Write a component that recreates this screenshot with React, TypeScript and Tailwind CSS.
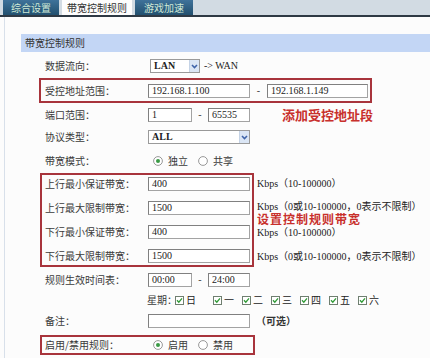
import React from "react";

const Input = ({ w, v }: { w: string; v?: string }) => (
  <div
    className={`${w} h-[14px] shrink-0 border border-[#a3a3a3] border-t-[#808080] border-l-[#808080] bg-white flex items-center pl-[3px] font-['Liberation_Serif',serif] text-[10px] leading-none text-[#222]`}
  >
    {v}
  </div>
);

const Select = ({ w, v }: { w: string; v: string }) => (
  <div
    className={`${w} h-[14px] shrink-0 border border-[#9a9a9a] bg-white flex items-center justify-between font-['Liberation_Serif',serif] text-[10px] leading-none font-semibold text-[#222]`}
  >
    <span className="pl-[3px]">{v}</span>
    <div className="w-[10px] h-[12px] bg-[#dbe6f5] border-l border-[#c5d3e6] flex items-center justify-center">
      <svg width="7" height="5" viewBox="0 0 7 5">
        <path d="M1 1 L3.5 3.6 L6 1" stroke="#3f63a8" strokeWidth="1.5" fill="none" />
      </svg>
    </div>
  </div>
);

const Radio = ({ on }: { on?: boolean }) => (
  <svg width="10" height="10" viewBox="0 0 10 10" className="shrink-0">
    <circle cx="5" cy="5" r="4.4" fill="#fff" stroke="#8c8c8c" strokeWidth="0.9" />
    {on && <circle cx="5" cy="5" r="2" fill="#3a9a45" />}
  </svg>
);

const Check = () => (
  <svg width="9" height="9" viewBox="0 0 9 9" className="shrink-0">
    <rect x="0.5" y="0.5" width="8" height="8" fill="#fff" stroke="#6f7f70" strokeWidth="1" />
    <path d="M2 4.3 L3.8 6.2 L7 2.4" stroke="#2f9a35" strokeWidth="1.3" fill="none" />
  </svg>
);

const RadioPair = ({ a, b }: { a: string; b: string }) => (
  <div className="flex items-center ml-[5px]">
    <Radio on />
    <span className="ml-[5px]">{a}</span>
    <span className="ml-[10px] flex items-center">
      <Radio />
    </span>
    <span className="ml-[5px]">{b}</span>
  </div>
);

const Label = ({ t }: { t: string }) => <div className="w-[103px] shrink-0">{t}</div>;

const Dash = ({ w }: { w: string }) => (
  <div className={`${w} shrink-0 text-center font-['Liberation_Serif',serif] text-[10px]`}>-</div>
);

const Kbps = ({ t, m }: { t: string; m: string }) => (
  <div className={`${m} h-[17px] flex items-center font-['Liberation_Serif','Noto_Sans_CJK_SC',serif] text-[10px] text-[#222] whitespace-nowrap`}>
    {t}
  </div>
);

export default function App() {
  const days = ["日", "一", "二", "三", "四", "五", "六"];
  return (
    <div className="w-[430px] h-[358px] overflow-hidden bg-[#fcfcfc] font-['Noto_Sans_CJK_SC',sans-serif] text-[10px] leading-none text-[#3a3a3a]">
      {/* tab bar */}
      <div className="h-[17px] bg-[#d2dbe3] border-b-2 border-[#2e3944] flex items-end pl-[3px] gap-[3px]">
        <div className="w-[56px] h-[15px] bg-gradient-to-b from-[#3f729a] to-[#22506f] text-[#cfe9d6] flex items-center justify-center">
          综合设置
        </div>
        <div className="w-[70px] h-[15px] bg-[#fdfdfd] text-[#333] flex items-center justify-center">
          带宽控制规则
        </div>
        <div className="w-[58px] h-[15px] bg-gradient-to-b from-[#3f729a] to-[#22506f] text-[#cfe9d6] flex items-center justify-center">
          游戏加速
        </div>
      </div>

      <div className="ml-[4px] border-l border-[#d8e0ea] h-[341px] pt-[17px]">
        {/* section header */}
        <div className="ml-[16px] h-[18px] bg-[#c3d6f5] flex items-center pl-[4px] text-[#333]">带宽控制规则</div>

        {/* 数据流向 */}
        <div className="mt-[2px] h-[24px] flex items-center pl-[40px]">
          <Label t="数据流向：" />
          <div className="ml-[2px]">
            <Select w="w-[50px]" v="LAN" />
          </div>
          <span className="ml-[4px] font-['Liberation_Serif',serif] text-[#222]">-&gt; WAN</span>
        </div>

        {/* 受控地址范围 */}
        <div className="ml-[34px] w-[333px] h-[25px] border-2 border-[#a8343c] flex items-center pl-[4px]">
          <Label t="受控地址范围：" />
          <Input w="w-[102px]" v="192.168.1.100" />
          <Dash w="w-[17px]" />
          <Input w="w-[101px]" v="192.168.1.149" />
        </div>

        {/* 端口范围 */}
        <div className="h-[23px] flex items-center pl-[40px]">
          <Label t="端口范围：" />
          <Input w="w-[44px]" v="1" />
          <Dash w="w-[16px]" />
          <Input w="w-[42px]" v="65535" />
          <span className="ml-[32px] text-[13px] font-bold text-[#c8302c] whitespace-nowrap">添加受控地址段</span>
        </div>

        {/* 协议类型 */}
        <div className="h-[22px] flex items-center pl-[40px]">
          <Label t="协议类型：" />
          <Select w="w-[102px]" v="ALL" />
        </div>

        {/* 带宽模式 */}
        <div className="h-[25px] flex items-center pl-[40px]">
          <Label t="带宽模式：" />
          <RadioPair a="独立" b="共享" />
        </div>

        {/* bandwidth box */}
        <div className="flex relative">
          <div className="ml-[35px] w-[214px] border-2 border-[#a8343c] flex flex-col gap-[7px] pb-[1px]">
            {[
              ["上行最小保证带宽：", "400"],
              ["上行最大限制带宽：", "1500"],
              ["下行最小保证带宽：", "400"],
              ["下行最大限制带宽：", "1500"],
            ].map(([l, v]) => (
              <div key={l} className="h-[17px] flex items-center pl-[3px]">
                <Label t={l} />
                <Input w="w-[102px]" v={v} />
              </div>
            ))}
          </div>
          <div className="ml-[3px] pt-[2px] flex flex-col">
            <Kbps m="" t="Kbps（10-100000）" />
            <Kbps m="mt-[6px]" t="Kbps（0或10-100000，0表示不限制）" />
            <Kbps m="mt-[9px]" t="Kbps（10-100000）" />
            <Kbps m="mt-[7px]" t="Kbps（0或10-100000，0表示不限制）" />
          </div>
          <span className="absolute left-[252px] top-[40.5px] font-['Liberation_Serif','Noto_Sans_CJK_SC',serif] text-[12px] leading-none tracking-[1px] font-bold text-[#c8302c] whitespace-nowrap">
            设置控制规则带宽
          </span>
        </div>

        {/* 规则生效时间表 */}
        <div className="h-[26px] flex items-center pl-[40px]">
          <Label t="规则生效时间表：" />
          <Input w="w-[44px]" v="00:00" />
          <Dash w="w-[16px]" />
          <Input w="w-[42px]" v="24:00" />
        </div>

        {/* 星期 */}
        <div className="h-[14px] flex items-center pl-[142px]">
          <span>星期：</span>
          <div className="flex items-center ml-[-2px]">
            {days.map((d, i) => (
              <div key={d} className={`flex items-center ${i === 0 ? "mr-[17px]" : "mr-[8px]"}`}>
                <Check />
                <span className="ml-[2px] text-[#222]">{d}</span>
              </div>
            ))}
          </div>
        </div>

        {/* 备注 */}
        <div className="h-[28px] flex items-center pl-[40px]">
          <Label t="备注：" />
          <Input w="w-[102px]" />
          <span className="ml-[6px] font-semibold text-[#333]">（可选）</span>
        </div>

        {/* 启用/禁用规则 */}
        <div className="ml-[35px] w-[215px] h-[20px] border-2 border-[#a8343c] flex items-center pl-[3px]">
          <Label t="启用/禁用规则：" />
          <RadioPair a="启用" b="禁用" />
        </div>
      </div>
    </div>
  );
}
